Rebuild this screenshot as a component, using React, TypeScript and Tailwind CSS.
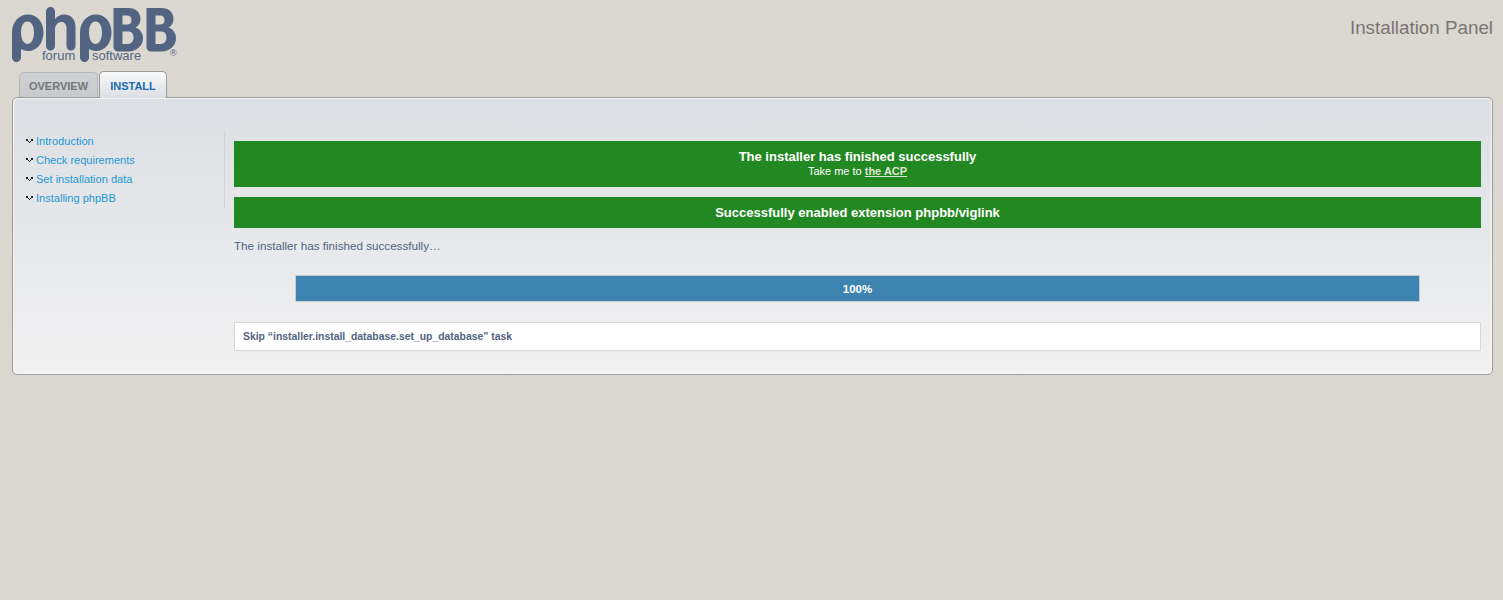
import React from 'react';

const font = "font-['Liberation_Sans',Arial,sans-serif]";

const steps = ['Introduction', 'Check requirements', 'Set installation data', 'Installing phpBB'];

// logo shapes, drawn at x = 0 and moved with translate
const pShape =
  'M0 57.500V32.500C0 22 7 14.500 16 14.500C25 14.500 31.500 22 31.500 32.500C31.500 43 25 51 16 51C13.500 51 11 50.300 9 49V57.500C9 60 6.800 62 4.500 62C2.200 62 0 60 0 57.500Z' +
  'M9 32.500C9 26 11.500 21.500 15.500 21.500C19.500 21.500 22 26 22 32.500C22 39 19.500 44 15.500 44C11.500 44 9 39 9 32.500Z';
const hShape =
  'M46 11.500C46 9 48 7 50.500 7C53 7 55 9 55 11.500V19C57.500 16 60.500 14.500 64 14.500C71.500 14.500 75.500 20 75.500 27V46C75.500 48.500 73.500 50.500 71 50.500C68.500 50.500 66.500 48.500 66.500 46V28.500C66.500 24.500 64.500 22 61.500 22C58 22 55 25 55 29.500V46C55 48.500 53 50.500 50.500 50.500C48 50.500 46 48.500 46 46Z';
const bShape =
  'M0 8H15C22.500 8 27 12.500 27 19C27 23 25 26 22 27.500C26.500 29 29.500 33 29.500 38C29.500 46 23 51.500 15 51.500H4.500C2 51.500 0 49.500 0 47Z' +
  'M9 15.500V24.500H13.500C16.500 24.500 18 23 18 20C18 17 16.500 15.500 13.500 15.500Z' +
  'M9 31.500V44H14.500C18 44 20 41 20 37.500C20 33.500 18 31.500 14.500 31.500Z';

const Logo = () => (
  <div className="relative w-[170px] h-[64px]">
    <svg width="170" height="64" viewBox="12 2 170 64" fill="#536482" className="absolute left-0 top-0">
      <path d={pShape} fillRule="evenodd" transform="translate(12 0)" />
      <path d={hShape} />
      <path d={pShape} fillRule="evenodd" transform="translate(80 0)" />
      <path d={bShape} fillRule="evenodd" transform="translate(113.500 0)" />
      <path d={bShape} fillRule="evenodd" transform="translate(146.500 0)" />
    </svg>
    <span className="absolute left-[30px] top-[46px] text-[13px] leading-[16px] text-[#536482]">forum</span>
    <span className="absolute left-[80px] top-[46px] text-[13px] leading-[16px] text-[#536482]">software</span>
    <span className="absolute left-[158px] top-[46px] text-[9px] leading-[10px] text-[#536482]">®</span>
  </div>
);

const Bullet = () => (
  <svg width="7" height="5" viewBox="0 0 7 5" className="shrink-0">
    <path d="M0 0h2v2H0zM5 0h2v2H5zM2 2h1v1H2zM4 2h1v1H4zM3 3h1v1H3z" fill="#1c2130" />
  </svg>
);

const App: React.FC = () => {
  return (
    <div className={`${font} min-h-[600px] bg-[#dbd8d1] pl-[12px] pr-[10px] text-[11px]`}>
      {/* header */}
      <div className="flex justify-between h-[71px] pt-[2px]">
        <Logo />
        <h1 className="text-[18.800px] leading-[21px] text-[#7a7672] mt-[15px]">Installation Panel</h1>
      </div>

      {/* tabs */}
      <div className="flex items-end gap-px pl-[7px] h-[27px] relative z-10 -mb-px">
        <div className="w-[79px] h-[25px] mb-px pt-[2px] flex items-center justify-center rounded-t-[5px] border border-b-0 border-[#b4b6ba] bg-gradient-to-b from-[#cfd1d5] to-[#c7c9cd] font-bold text-[#747678]">
          OVERVIEW
        </div>
        <div className="w-[68px] h-[27px] pt-[2px] flex items-center justify-center rounded-t-[5px] border border-b-0 border-[#9b9b9b] bg-gradient-to-b from-[#f8f9fa] to-[#dcdfe3] font-bold text-[#1b6ab1]">
          INSTALL
        </div>
      </div>

      {/* panel */}
      <div className="h-[278px] rounded-[5px] border border-[#9b9b9b] bg-gradient-to-b from-[#dcdfe3] to-[#f1f1f2] pt-[33px] shadow-[inset_1px_1px_0_#f4f4f4,inset_-1px_-1px_0_#f8f8f8]">
        <div className="flex">
          <ul className="w-[212px] h-[77px] border-r border-[#cfd2d6] pl-[13px] pt-px">
            {steps.map((s) => (
              <li key={s} className="flex items-center gap-[3px] h-[19px] text-[11.050px] text-[#1f99d4]">
                <Bullet />
                <span>{s}</span>
              </li>
            ))}
          </ul>

          <div className="flex-1 ml-[9px] mr-[11px] pt-[10px]">
            <div className="h-[46px] bg-[#228822] text-white text-center pt-[8px]">
              <p className="text-[13px] leading-[15px] font-bold">The installer has finished successfully</p>
              <p className="text-[11px] leading-[13px] pt-px">
                Take me to <a className="font-bold underline text-[#dfe6cf]">the ACP</a>
              </p>
            </div>
            <div className="mt-[10px] h-[31px] bg-[#228822] text-white text-center text-[13px] leading-[31px] font-bold">
              Successfully enabled extension phpbb/viglink
            </div>
            <p className="mt-[11px] text-[11.670px] leading-[14px] text-[#536482]">The installer has finished successfully…</p>

            <div className="mx-[61px] mt-[22px] h-[27px] border border-[#c9cdd2] bg-[#3d85b0] text-center text-[11.500px] leading-[26px] font-bold text-white">
              100%
            </div>

            <div className="mt-[20px] h-[29px] border border-[#d9d7d2] bg-white pl-[8px] text-[10.400px] leading-[27px] font-bold text-[#536482]">
              Skip “installer.install_database.set_up_database” task
            </div>
          </div>
        </div>
      </div>
    </div>
  );
};

export default App;
